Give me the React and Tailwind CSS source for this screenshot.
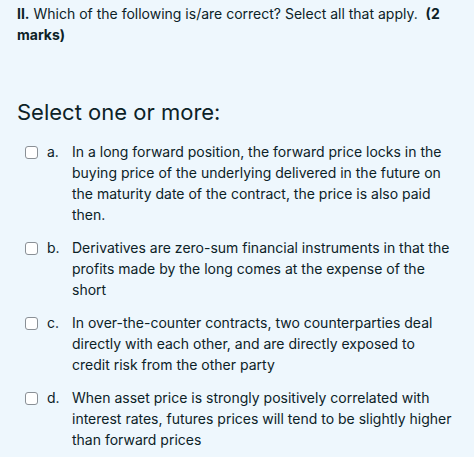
const options = [
  {
    letter: "a.",
    text: "In a long forward position, the forward price locks in the buying price of the underlying delivered in the future on the maturity date of the contract, the price is also paid then.",
  },
  {
    letter: "b.",
    text: "Derivatives are zero-sum financial instruments in that the profits made by the long comes at the expense of the short",
  },
  {
    letter: "c.",
    text: "In over-the-counter contracts, two counterparties deal directly with each other, and are directly exposed to credit risk from the other party",
  },
  {
    letter: "d.",
    text: "When asset price is strongly positively correlated with interest rates, futures prices will tend to be slightly higher than forward prices",
  },
];

export default function App() {
  return (
    <div
      className="min-h-screen w-[474px] bg-[#eef7fd] pl-[17px] pr-[14px] pt-[3px] text-[#0c2227]"
      style={{ fontFamily: 'Inter, "Liberation Sans", Arial, sans-serif' }}
    >
      <p className="text-[14px] leading-[21px]">
        <b>II.</b> Which of the following is/are correct? Select all that apply.&nbsp; <b>(2 marks)</b>
      </p>

      <h2 className="mt-[54px] text-[22px] leading-[26px]">Select one or more:</h2>

      <div className="mt-[16px] flex flex-col gap-[12px]">
        {options.map((opt) => (
          <label key={opt.letter} className="flex text-[14px] leading-[21px]">
            <span className="mt-[5px] ml-[8px] h-[13px] w-[13px] shrink-0 rounded-[3px] border border-[#8a9096] bg-white" />
            <span className="ml-[9px] w-[25px] shrink-0">{opt.letter}</span>
            <span className="pr-[8px]">{opt.text}</span>
          </label>
        ))}
      </div>
    </div>
  );
}
